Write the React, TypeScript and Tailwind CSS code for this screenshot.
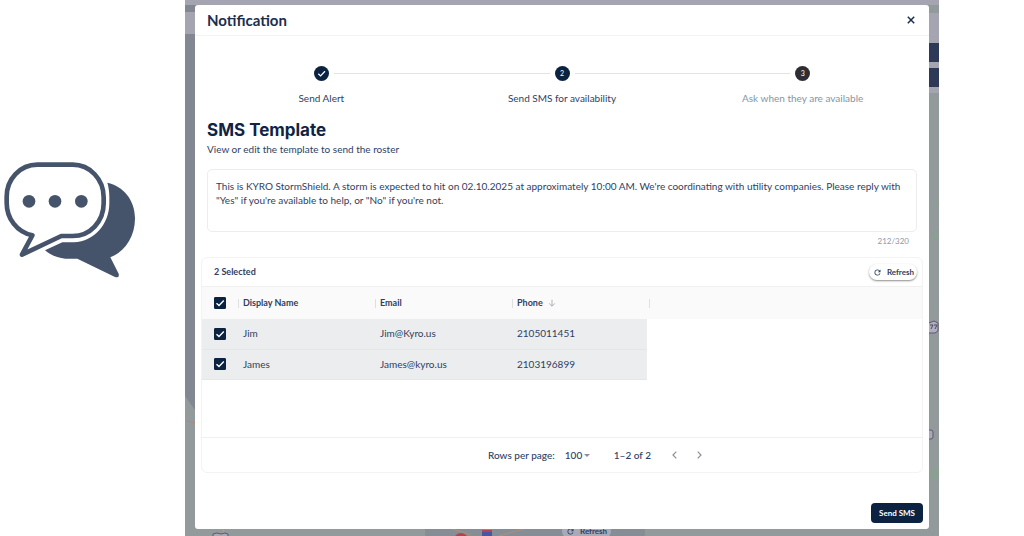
import type { ReactNode } from "react";

const steps = [
  { label: "Send Alert", state: "done" },
  { label: "Send SMS for availability", state: "active" },
  { label: "Ask when they are available", state: "pending" },
];

const contacts = [
  { name: "Jim", email: "Jim@Kyro.us", phone: "2105011451" },
  { name: "James", email: "James@kyro.us", phone: "2103196899" },
];

const message =
  "This is KYRO StormShield. A storm is expected to hit on 02.10.2025 at approximately 10:00 AM. We're coordinating with utility companies. Please reply with \"Yes\" if you're available to help, or \"No\" if you're not.";

function ChatIcon() {
  return (
    <svg viewBox="0 30 420 360" className="w-[140px] h-[120px]" aria-hidden="true">
      <path
        d="M322 98C370 108 405 150 405 205C405 260 375 305 331 322L356 371Q359 385 345 381L232 326H196C172 324 152 315 135 301L187 277H222C283 275 328 222 328 160V142C328 126 326 111 322 98Z"
        fill="#45546a"
      />
      <path
        d="M112 44H218C270 44 311 88 311 142V160C311 215 270 258 218 258H184L66 314L97 256C50 246 20 205 20 158V140C20 88 60 44 112 44Z"
        fill="white"
        stroke="#45546a"
        strokeWidth="14"
        strokeLinejoin="round"
      />
      <circle cx="87" cy="154" r="19" fill="#45546a" />
      <circle cx="165" cy="154" r="19" fill="#45546a" />
      <circle cx="244" cy="154" r="19" fill="#45546a" />
    </svg>
  );
}

function MapBackdrop() {
  return (
    <svg
      viewBox="0 0 754 536"
      preserveAspectRatio="none"
      className="absolute inset-0 w-full h-full"
      aria-hidden="true"
    >
      <rect width="754" height="536" fill="#929a9b" />
      <path d="M0 0H100V480L10 410L0 396Z" fill="#828791" />
      <rect x="240" y="520" width="220" height="16" fill="#868d94" />
      <rect width="754" height="5" fill="#a5a5b2" />
      <rect y="12" width="20" height="22" fill="#a5a5b2" />
      <rect x="740" y="13" width="14" height="80" fill="#a5a5b2" />
      <rect x="740" y="43" width="14" height="19" fill="#2d3957" />
      <rect x="740" y="68" width="14" height="19" fill="#2d3957" />
      <path d="M0 421L12 423" stroke="#b28a74" />
      <path d="M264 528L286 535M314 536L342 528" stroke="#b08f79" fill="none" />
      <path d="M748 205l6-4v6zM747 233l7-2v7l-5 2zM747 305l4-2v4zM745 470l9-4v12l-9 3z" fill="#8b9f93" />
      <path d="M39 528l-1 5" stroke="#b9a45c" fill="none" />
      <path d="M28 536v-2l4-1 4 1 4-1 3 1v2" stroke="#5d5873" fill="#a9a7b6" />
      <rect x="734" y="430" width="14" height="9" rx="2" stroke="#5d5873" fill="#a9a7b6" />
      <path d="M740 322l4 1 5-2 4 2v8l-3 2h-10z" stroke="#5d5873" fill="#b0aebd" />
      <path d="M745 325h3l-2 4M749 325h3l-2 4" stroke="#4a4660" fill="none" />
      <circle cx="276" cy="540" r="7" fill="#b04450" />
      <rect x="297" y="530" width="10" height="2" fill="#b04450" />
      <rect x="297" y="532" width="10" height="4" fill="#4a54a0" />
    </svg>
  );
}

function RefreshIcon() {
  return (
    <svg viewBox="0 0 24 24" className="w-[9px] h-[9px]" fill="currentColor" aria-hidden="true">
      <path d="M17.65 6.35A7.96 7.96 0 0 0 12 4a8 8 0 1 0 7.73 10h-2.08A6 6 0 1 1 12 6c1.66 0 3.14.69 4.22 1.78L13 11h7V4z" />
    </svg>
  );
}

function Check({ className }: { className: string }) {
  return (
    <svg viewBox="0 0 12 12" className={className} fill="none" stroke="white" aria-hidden="true">
      <path d="M2.5 6.2L5 8.6L9.8 3.6" strokeWidth="1.4" />
    </svg>
  );
}

function Checkbox({ label }: { label: string }) {
  return (
    <label className="grid w-3 h-3 ml-3">
      <input
        type="checkbox"
        defaultChecked
        aria-label={label}
        className="peer col-start-1 row-start-1 appearance-none w-3 h-3 rounded-[1px] border border-[#0b2340] checked:bg-[#0b2340]"
      />
      <Check className="col-start-1 row-start-1 w-3 h-3 pointer-events-none invisible peer-checked:visible" />
    </label>
  );
}

function HeaderCell({ children }: { children?: ReactNode }) {
  return (
    <th scope="col" className="p-0 text-left text-[9px] font-bold">
      <div className="flex items-center gap-[5px] ml-[2px] pl-1 h-[9px] border-l border-[#dddfe2]">
        {children}
      </div>
    </th>
  );
}

function Stepper() {
  return (
    <ol className="grid grid-cols-3 px-[6px] pt-[30px]">
      {steps.map((step, i) => (
        <li key={step.label} className="flex flex-col items-center">
          <div className="flex items-center gap-[5px] w-full">
            <span className={i === 0 ? "flex-1 h-px" : "flex-1 h-px bg-[#e2e3e5]"} />
            <span
              className={
                step.state === "pending"
                  ? "flex items-center justify-center w-[15px] h-[15px] rounded-full bg-[#2d2d33] text-white text-[7px]"
                  : "flex items-center justify-center w-[15px] h-[15px] rounded-full bg-[#0b2340] text-white text-[7px]"
              }
            >
              {step.state === "done" ? <Check className="w-[11px] h-[11px]" /> : i + 1}
            </span>
            <span
              className={i === steps.length - 1 ? "flex-1 h-px" : "flex-1 h-px bg-[#e2e3e5]"}
            />
          </div>
          <span
            className={
              step.state === "pending" ? "mt-[9px] leading-4 text-[#8296a8]" : "mt-[9px] leading-4"
            }
          >
            {step.label}
          </span>
        </li>
      ))}
    </ol>
  );
}

function ContactTable() {
  return (
    <section className="mx-[6px] mt-[10px] border border-[#f3f3f4] rounded-md overflow-hidden">
      <div className="flex items-center justify-between h-[28px] pl-3 pr-[5px]">
        <span className="text-[9px] font-bold">2 Selected</span>
        <button className="flex items-center gap-[5px] h-4 pl-1 pr-[3px] rounded-full bg-white text-[8px] font-bold shadow-[0_1px_2px_rgba(0,0,0,0.45)]">
          <RefreshIcon />
          Refresh
        </button>
      </div>
      <div className="h-[152px] border-y border-[#f0f0f1]">
        <table className="w-full table-fixed border-collapse">
          <colgroup>
            <col className="w-[34px]" />
            <col className="w-[137px]" />
            <col className="w-[137px]" />
            <col className="w-[137px]" />
            <col />
          </colgroup>
          <thead>
            <tr className="h-[32px] bg-[#fafafa]">
              <th scope="col" className="p-0">
                <Checkbox label="Select all rows" />
              </th>
              <HeaderCell>Display Name</HeaderCell>
              <HeaderCell>Email</HeaderCell>
              <HeaderCell>
                Phone
                <svg
                  viewBox="0 0 10 10"
                  className="w-2 h-2"
                  fill="none"
                  stroke="#9a9fa8"
                  aria-hidden="true"
                >
                  <path d="M5 1V9M1.5 5.5L5 9L8.5 5.5" />
                </svg>
              </HeaderCell>
              <HeaderCell />
            </tr>
          </thead>
          <tbody>
            {contacts.map((contact) => (
              <tr key={contact.name} className="h-[30px]">
                <td className="p-0 bg-[#ebedee] border-b border-[#e4e6e8]">
                  <Checkbox label={`Select ${contact.name}`} />
                </td>
                <td className="py-0 pl-[7px] bg-[#ebedee] border-b border-[#e4e6e8]">
                  {contact.name}
                </td>
                <td className="py-0 pl-[7px] bg-[#ebedee] border-b border-[#e4e6e8]">
                  {contact.email}
                </td>
                <td className="py-0 pl-[7px] bg-[#ebedee] border-b border-[#e4e6e8]">
                  {contact.phone}
                </td>
                <td />
              </tr>
            ))}
          </tbody>
        </table>
      </div>
      <div className="flex items-center h-[34px] pl-[286px] font-medium">
        <label htmlFor="rows-per-page">Rows per page:</label>
        <div className="flex items-center ml-[10px]">
          <select
            id="rows-per-page"
            defaultValue="100"
            className="appearance-none w-[19px] bg-transparent"
          >
            <option>100</option>
          </select>
          <svg viewBox="0 0 6 3" className="w-[6px] h-[3px]" fill="#8a8f99" aria-hidden="true">
            <path d="M0 0H6L3 3Z" />
          </svg>
        </div>
        <span className="ml-6">1–2 of 2</span>
        <button aria-label="Previous page" className="ml-[21px]">
          <svg viewBox="0 0 5 8" className="w-[5px] h-2" fill="none" stroke="#8d919a" aria-hidden="true">
            <path d="M4.3 0.7L1 4L4.3 7.3" strokeWidth="1.2" />
          </svg>
        </button>
        <button aria-label="Next page" className="ml-5">
          <svg viewBox="0 0 5 8" className="w-[5px] h-2" fill="none" stroke="#8d919a" aria-hidden="true">
            <path d="M0.7 0.7L4 4L0.7 7.3" strokeWidth="1.2" />
          </svg>
        </button>
      </div>
    </section>
  );
}

export default function App() {
  return (
    <div className="flex min-h-screen bg-white font-['Lato',sans-serif] text-[10px] text-[#2e4163]">
      <aside className="w-[185px] shrink-0 pt-[160px]">
        <ChatIcon />
      </aside>
      <main className="relative flex-1 mr-[85px] px-[10px] pt-[5px] pb-[7px] overflow-hidden">
        <MapBackdrop />
        <div className="absolute left-[377px] top-[523px] flex items-center gap-[5px] h-4 px-1 rounded-full bg-[#a9a9b8] text-[8px] font-bold">
          <RefreshIcon />
          Refresh
        </div>
        <div
          role="dialog"
          aria-labelledby="dialog-title"
          className="relative bg-white rounded-[3px] pb-[6px]"
        >
          <header className="flex items-center justify-between h-[31px] pl-3 pr-[14px] border-b border-[#f3f3f4]">
            <h1 id="dialog-title" className="text-[15px] font-bold text-[#1c2e4e]">
              Notification
            </h1>
            <button aria-label="Close">
              <svg viewBox="0 0 8 8" className="w-2 h-2" stroke="#1c2e4e" aria-hidden="true">
                <path d="M0.8 0.8L7.2 7.2M7.2 0.8L0.8 7.2" strokeWidth="1.5" />
              </svg>
            </button>
          </header>
          <Stepper />
          <div className="px-3 pt-[14px]">
            <h2 className="font-['Inter',sans-serif] text-[17px] leading-5 font-bold text-[#0f2443]">
              SMS Template
            </h2>
            <label htmlFor="sms-template" className="block mt-px leading-4">
              View or edit the template to send the roster
            </label>
            <textarea
              id="sms-template"
              defaultValue={message}
              className="block w-full h-[63px] mt-3 px-2 py-[9px] leading-[14px] border border-[#ededee] rounded-[5px] resize-none"
            />
            <div className="mt-[3px] pr-2 text-right text-[8px] leading-3 text-[#8b98a8]">
              212/320
            </div>
          </div>
          <ContactTable />
          <div className="flex justify-end mt-[30px] pr-[6px]">
            <button className="h-[20px] px-2 rounded-[4px] bg-[#0b2340] text-white text-[8px] font-bold">
              Send SMS
            </button>
          </div>
        </div>
      </main>
    </div>
  );
}
